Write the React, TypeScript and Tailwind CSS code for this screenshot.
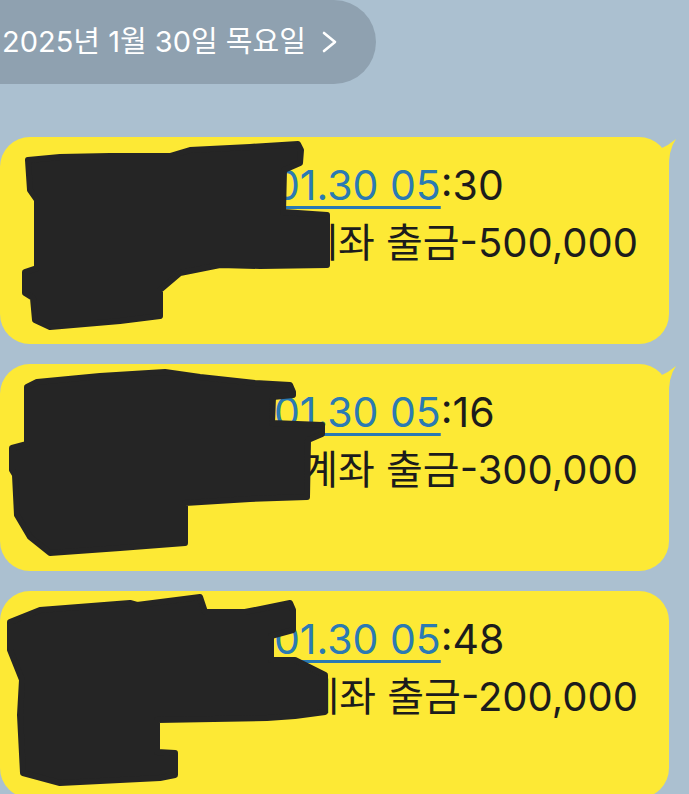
const font = { fontFamily: 'Inter, "Noto Sans CJK KR", sans-serif' };

interface Message {
  id: number;
  time: string;
  amount: string;
  tail: boolean;
}

const messages: Message[] = [
  { id: 1, time: '30', amount: '500,000', tail: true },
  { id: 2, time: '16', amount: '300,000', tail: true },
  { id: 3, time: '48', amount: '200,000', tail: false },
];

// speech bubble tail at the top right corner
const Tail = () => (
  <svg className="absolute right-[-9px] top-0" width="30" height="34" viewBox="0 0 30 34">
    <path d="M2 6 Q10 12 12 12 Q21 8 28 2 Q20 13 21 34 L2 34 Z" fill="#fde935" />
  </svg>
);

const Bubble: React.FC<{ msg: Message }> = ({ msg }) => (
  <div className="relative h-[207px] w-[669px] rounded-[30px] bg-[#fde935] pt-[20px] text-[41px] leading-[57px] text-[#1c1c1c]">
    {msg.tail && <Tail />}
    <div className="flex whitespace-nowrap">
      <span className="w-[274px] shrink-0" />
      <span className="text-[#2a7ab3] underline decoration-[3px] underline-offset-[6px]">01.30 05</span>
      <span>:{msg.time}</span>
    </div>
    <div className="flex items-baseline justify-end whitespace-nowrap pr-[31px]">
      <span className="text-[40px]">계좌 출금</span>
      <span className="text-[40px]">-{msg.amount}</span>
    </div>
  </div>
);

const Redactions = () => (
  <svg className="pointer-events-none absolute left-0 top-0" width="689" height="794" viewBox="0 0 689 794">
    <g fill="#252525" stroke="#252525" strokeWidth="6" strokeLinejoin="round">
      <path d="M28 160 L60 157 L110 156 L170 156 L190 150 L250 147 L298 144 L301 150 L300 163 L284 170 L283 212 L327 215 L327 265 L260 266 L220 265 L180 273 L160 290 L160 316 L120 321 L50 327 L35 320 L33 298 L25 293 L25 272 L37 268 L37 200 L30 190 Z" />
      <path d="M27 387 L37 382 L100 376 L165 372 L200 377 L255 383 L290 385 L293 392 L293 395 L273 397 L272 423 L322 425 L322 434 L308 440 L307 497 L250 499 L185 503 L185 543 L120 548 L50 553 L30 537 L17 515 L15 475 L12 470 L12 448 L27 444 Z" />
      <path d="M10 622 L40 610 L130 603 L137 605 L200 597 L205 612 L245 612 L290 603 L293 610 L293 630 L271 636 L271 660 L295 660 L325 675 L325 712 L295 716 L267 718 L157 720 L157 752 L175 753 L175 775 L160 778 L60 783 L23 773 L20 715 L22 680 L10 650 Z" />
    </g>
  </svg>
);

export default function App() {
  return (
    <div className="relative h-[794px] w-[689px] overflow-hidden bg-[#abc0d0]" style={font}>
      <div className="flex h-[84px] w-[376px] items-center gap-[15px] rounded-r-[42px] bg-[#8fa1b0] pl-[2px] text-[29px] text-white">
        <span>2025년 1월 30일 목요일</span>
        <svg width="17" height="22" viewBox="0 0 17 22">
          <path d="M3 2 L14 11 L3 20" fill="none" stroke="white" strokeWidth="2.6" strokeLinecap="round" strokeLinejoin="round" />
        </svg>
      </div>
      <div className="mt-[53px] flex flex-col gap-[20px]">
        {messages.map((m) => (
          <Bubble key={m.id} msg={m} />
        ))}
      </div>
      <Redactions />
    </div>
  );
}
